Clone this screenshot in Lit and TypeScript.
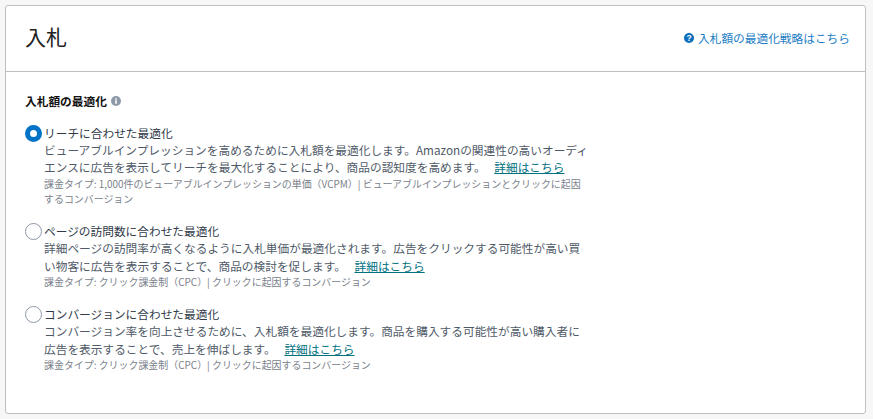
import { LitElement, css, html } from "lit";
import { customElement } from "lit/decorators.js";

interface Option {
  title: string;
  lines: string[];
  link: string;
  note: string[];
  selected?: boolean;
}

const options: Option[] = [
  {
    title: "リーチに合わせた最適化",
    lines: [
      "ビューアブルインプレッションを高めるために入札額を最適化します。Amazonの関連性の高いオーディ",
      "エンスに広告を表示してリーチを最大化することにより、商品の認知度を高めます。",
    ],
    link: "詳細はこちら",
    note: [
      "課金タイプ: 1,000件のビューアブルインプレッションの単価（VCPM）| ビューアブルインプレッションとクリックに起因",
      "するコンバージョン",
    ],
    selected: true,
  },
  {
    title: "ページの訪問数に合わせた最適化",
    lines: [
      "詳細ページの訪問率が高くなるように入札単価が最適化されます。広告をクリックする可能性が高い買",
      "い物客に広告を表示することで、商品の検討を促します。",
    ],
    link: "詳細はこちら",
    note: ["課金タイプ: クリック課金制（CPC）| クリックに起因するコンバージョン"],
  },
  {
    title: "コンバージョンに合わせた最適化",
    lines: [
      "コンバージョン率を向上させるために、入札額を最適化します。商品を購入する可能性が高い購入者に",
      "広告を表示することで、売上を伸ばします。",
    ],
    link: "詳細はこちら",
    note: ["課金タイプ: クリック課金制（CPC）| クリックに起因するコンバージョン"],
  },
];

@customElement("app-root")
export class AppRoot extends LitElement {
  static styles = css`
    :host {
      display: block;
      height: 419px;
      box-sizing: border-box;
      padding: 5px 7px 5px 5px;
      background: #f7f7f7;
      font-family: "Noto Sans CJK JP", "Liberation Sans", sans-serif;
      color: #232f3e;
    }
    .card {
      height: 100%;
      box-sizing: border-box;
      background: #fff;
      border: 1px solid #bfbfbf;
      border-radius: 3px;
    }
    .header {
      height: 66px;
      box-sizing: border-box;
      border-bottom: 1px solid #bfbfbf;
      display: flex;
      align-items: center;
      justify-content: space-between;
      padding: 0 15px 6px 19px;
    }
    h1 {
      margin: 0;
      font-size: 21px;
      font-weight: 400;
      line-height: 30px;
      color: #222;
    }
    .help {
      display: flex;
      align-items: center;
      gap: 4px;
      font-size: 11.7px;
      line-height: 16px;
      color: #1a7cc4;
      margin-top: 4px;
    }
    .body {
      padding: 20px 19px 0;
    }
    .section {
      display: flex;
      align-items: center;
      gap: 4px;
      font-size: 11.7px;
      font-weight: 700;
      line-height: 18px;
      color: #111;
    }
    .options {
      margin-top: 14.5px;
      display: flex;
      flex-direction: column;
      gap: 16.5px;
    }
    .option {
      display: flex;
      gap: 3px;
    }
    .radio {
      flex: none;
      width: 17px;
      height: 17px;
      box-sizing: border-box;
      border: 1px solid #8d96a5;
      border-radius: 50%;
      background: #fff;
    }
    .radio.on {
      border: 5px solid #0073c7;
    }
    .text {
      margin-left: -1px;
    }
    .title {
      font-size: 11.7px;
      line-height: 16px;
      color: #2f3a48;
    }
    .desc {
      font-size: 11.7px;
      line-height: 17.5px;
      color: #4f5a68;
      white-space: nowrap;
    }
    .desc a {
      margin-left: 6px;
      color: #00717f;
      text-decoration: underline;
    }
    .note {
      font-size: 9.95px;
      line-height: 15.5px;
      color: #7b828c;
      white-space: nowrap;
    }
  `;

  renderOption(o: Option) {
    return html`
      <div class="option">
        <div class="radio ${o.selected ? "on" : ""}"></div>
        <div class="text">
          <div class="title">${o.title}</div>
          <div class="desc">
            ${o.lines[0]}<br />${o.lines[1]} <a href="#">${o.link}</a>
          </div>
          <div class="note">${o.note.map((n) => html`<div>${n}</div>`)}</div>
        </div>
      </div>
    `;
  }

  render() {
    return html`
      <div class="card">
        <div class="header">
          <h1>入札</h1>
          <div class="help">
            <svg width="10" height="10" viewBox="0 0 10 10">
              <circle cx="5" cy="5" r="5" fill="#0a6ebd" />
              <text x="5" y="8.2" font-size="8.5" font-weight="700" text-anchor="middle" fill="#fff" font-family="Liberation Sans">?</text>
            </svg>
            <span>入札額の最適化戦略はこちら</span>
          </div>
        </div>
        <div class="body">
          <div class="section">
            入札額の最適化
            <svg width="10" height="10" viewBox="0 0 10 10">
              <circle cx="5" cy="5" r="5" fill="#8d99a8" />
              <rect x="4.2" y="4.2" width="1.6" height="3.6" fill="#fff" />
              <rect x="4.2" y="2.2" width="1.6" height="1.4" fill="#fff" />
            </svg>
          </div>
          <div class="options">${options.map((o) => this.renderOption(o))}</div>
        </div>
      </div>
    `;
  }
}
